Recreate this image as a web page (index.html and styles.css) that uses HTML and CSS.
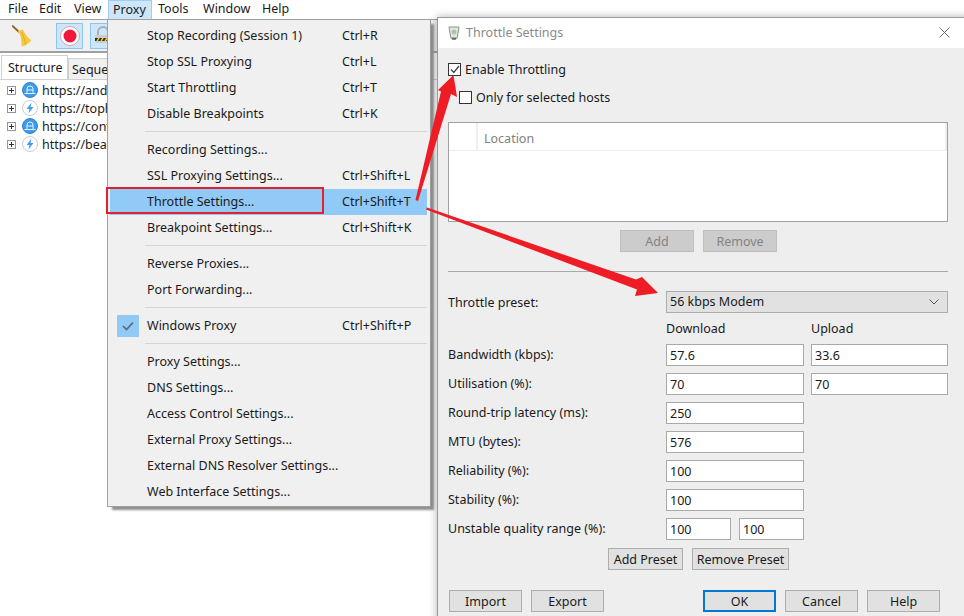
FILE: index.html
```html
<!DOCTYPE html>
<html lang="en">
<head>
<meta charset="utf-8">
<title>Throttle Settings</title>
<link rel="stylesheet" href="styles.css">
</head>
<body>
<div class="desktop">
  <div class="app">
    <nav class="menubar">
      <span class="mb-item mb-file">File</span>
      <span class="mb-item mb-edit">Edit</span>
      <span class="mb-item mb-view">View</span>
      <span class="mb-item mb-proxy">Proxy</span>
      <span class="mb-item mb-tools">Tools</span>
      <span class="mb-item mb-window">Window</span>
      <span class="mb-item mb-help">Help</span>
    </nav>
    <div class="toolbar">
      <span class="tool tool-broom">
        <svg width="20" height="22" viewBox="0 0 20 22"><path d="M0 .5 7 7" stroke="#8a6a2a" stroke-width="2" fill="none"/><path d="M6 6 11 4.500 C13 9 16 13 19.500 15.500 C16 19 13 21 9.500 21.500 C10 15 8.500 10 6 6Z" fill="#f7c93e"/><path d="M9.500 7 C11.500 11 13 15 13.500 19.500" stroke="#e2a91c" fill="none"/></svg>
      </span>
      <span class="tool tool-record">
        <svg width="20" height="20" viewBox="0 0 20 20"><circle cx="10" cy="10" r="9.500" fill="#fff" stroke="#c9a9b2"/><circle cx="10" cy="10" r="6.500" fill="#f0183c"/></svg>
      </span>
      <span class="tool tool-lock">
        <svg width="18" height="20" viewBox="0 0 18 20"><path d="M4 9V6a5 5 0 0 1 10 0v3" fill="none" stroke="#a9b0b8" stroke-width="2"/><rect x="1" y="9" width="16" height="8" fill="#c9ced4"/><rect x="1" y="12" width="16" height="3" fill="#2b2b1a"/><path d="M3 15 5 12M7 15 9 12M11 15 13 12M15 15 17 12" stroke="#f3c62a" stroke-width="1.500"/></svg>
      </span>
    </div>
    <div class="tabs">
      <span class="tab tab-active">Structure</span>
      <span class="tab">Seque</span>
    </div>
    <ul class="tree">
      <li class="tree-row"><span class="expander"></span><svg class="host-icon" width="16" height="16" viewBox="0 0 16 16"><circle cx="8" cy="8" r="7.500" fill="#3d9be9" stroke="#2f83d0"/><path d="M5 11.500V7a3 3 0 0 1 6 0v4.500M2.500 11.500h11M5 8h6" stroke="#e6f3fd" fill="none"/></svg>https://and</li>
      <li class="tree-row"><span class="expander"></span><svg class="host-icon" width="16" height="16" viewBox="0 0 16 16"><circle cx="8" cy="8" r="7.500" fill="#fff" stroke="#c6ccd6"/><path d="M9.500 2.500 4.500 9h3L6.500 13.500 11.500 7h-3Z" fill="#3f9fec"/></svg>https://toph</li>
      <li class="tree-row"><span class="expander"></span><svg class="host-icon" width="16" height="16" viewBox="0 0 16 16"><circle cx="8" cy="8" r="7.500" fill="#3d9be9" stroke="#2f83d0"/><path d="M5 11.500V7a3 3 0 0 1 6 0v4.500M2.500 11.500h11M5 8h6" stroke="#e6f3fd" fill="none"/></svg>https://cont</li>
      <li class="tree-row"><span class="expander"></span><svg class="host-icon" width="16" height="16" viewBox="0 0 16 16"><circle cx="8" cy="8" r="7.500" fill="#fff" stroke="#c6ccd6"/><path d="M9.500 2.500 4.500 9h3L6.500 13.500 11.500 7h-3Z" fill="#3f9fec"/></svg>https://bea</li>
    </ul>
  </div>

  <div class="menu">
    <div class="menu-row"><span>Stop Recording (Session 1)</span><kbd>Ctrl+R</kbd></div>
    <div class="menu-row"><span>Stop SSL Proxying</span><kbd>Ctrl+L</kbd></div>
    <div class="menu-row"><span>Start Throttling</span><kbd>Ctrl+T</kbd></div>
    <div class="menu-row"><span>Disable Breakpoints</span><kbd>Ctrl+K</kbd></div>
    <div class="menu-sep"></div>
    <div class="menu-row"><span>Recording Settings...</span></div>
    <div class="menu-row"><span>SSL Proxying Settings...</span><kbd>Ctrl+Shift+L</kbd></div>
    <div class="menu-row menu-row-hot"><span>Throttle Settings...</span><kbd>Ctrl+Shift+T</kbd></div>
    <div class="menu-row"><span>Breakpoint Settings...</span><kbd>Ctrl+Shift+K</kbd></div>
    <div class="menu-sep"></div>
    <div class="menu-row"><span>Reverse Proxies...</span></div>
    <div class="menu-row"><span>Port Forwarding...</span></div>
    <div class="menu-sep"></div>
    <div class="menu-row">
      <i class="menu-check"><svg width="12" height="10" viewBox="0 0 12 10"><path d="M1 5 4.500 8.500 11 1.500" fill="none" stroke="#5c6670" stroke-width="1.600"/></svg></i>
      <span>Windows Proxy</span><kbd>Ctrl+Shift+P</kbd>
    </div>
    <div class="menu-sep"></div>
    <div class="menu-row"><span>Proxy Settings...</span></div>
    <div class="menu-row"><span>DNS Settings...</span></div>
    <div class="menu-row"><span>Access Control Settings...</span></div>
    <div class="menu-row"><span>External Proxy Settings...</span></div>
    <div class="menu-row"><span>External DNS Resolver Settings...</span></div>
    <div class="menu-row"><span>Web Interface Settings...</span></div>
  </div>

  <section class="dialog">
    <header class="titlebar">
      <svg class="title-icon" width="14" height="15" viewBox="0 0 14 15"><path d="M2 2h10l-1.500 9a3.500 3.500 0 0 1-7 0Z" fill="#e4e6e4" stroke="#8d9089"/><circle cx="7" cy="7" r="2.500" fill="#a9c9a5"/><path d="M5 13.500h4" stroke="#6c6f69" stroke-width="2"/></svg>
      <span class="title-text">Throttle Settings</span>
      <svg class="title-close" width="11" height="11" viewBox="0 0 11 11"><path d="M.5.500l10 10M10.500.500l-10 10" stroke="#6f6f6f" fill="none"/></svg>
    </header>
    <div class="dialog-body">
      <label class="check-row check-main"><span class="checkbox"><svg width="10" height="9" viewBox="0 0 10 9"><path d="M1 4.500 3.800 7.500 9 1" fill="none" stroke="#444" stroke-width="1.300"/></svg></span>Enable Throttling</label>
      <label class="check-row check-sub"><span class="checkbox"></span>Only for selected hosts</label>
      <div class="hosts">
        <div class="hosts-head"><span class="hosts-gutter"></span><span class="hosts-col">Location</span></div>
      </div>
      <div class="hosts-actions">
        <button class="btn btn-off btn-host" type="button">Add</button>
        <button class="btn btn-off btn-host" type="button">Remove</button>
      </div>
      <hr class="rule">
      <div class="form-row preset-row">
        <span class="form-label">Throttle preset:</span>
        <div class="select"><span>56 kbps Modem</span><svg width="10" height="6" viewBox="0 0 10 6"><path d="M.5.500 5 5 9.500.5" fill="none" stroke="#555"/></svg></div>
      </div>
      <div class="form-row col-heads">
        <span class="form-label"></span>
        <span class="col-a">Download</span>
        <span class="col-b">Upload</span>
      </div>
      <div class="form-row"><span class="form-label">Bandwidth (kbps):</span><span class="field col-a">57.6</span><span class="field col-b">33.6</span></div>
      <div class="form-row"><span class="form-label">Utilisation (%):</span><span class="field col-a">70</span><span class="field col-b">70</span></div>
      <div class="form-row"><span class="form-label">Round-trip latency (ms):</span><span class="field col-a">250</span></div>
      <div class="form-row"><span class="form-label">MTU (bytes):</span><span class="field col-a">576</span></div>
      <div class="form-row"><span class="form-label">Reliability (%):</span><span class="field col-a">100</span></div>
      <div class="form-row"><span class="form-label">Stability (%):</span><span class="field col-a">100</span></div>
      <div class="form-row"><span class="form-label">Unstable quality range (%):</span><span class="field col-half">100</span><span class="field col-half2">100</span></div>
      <div class="preset-actions">
        <button class="btn btn-addp" type="button">Add Preset</button>
        <button class="btn btn-remp" type="button">Remove Preset</button>
      </div>
      <div class="dialog-actions">
        <button class="btn btn-foot" type="button">Import</button>
        <button class="btn btn-foot" type="button">Export</button>
        <span class="spacer"></span>
        <button class="btn btn-foot btn-default" type="button">OK</button>
        <button class="btn btn-foot" type="button">Cancel</button>
        <button class="btn btn-foot" type="button">Help</button>
      </div>
    </div>
  </section>

  <div class="callout-box"></div>
  <svg class="arrows" width="964" height="616" viewBox="0 0 964 616">
    <path d="M415.500 200 441 91.500 438 90 453.500 75 457 97 451 94 418 201Z" fill="#ee1c25"/>
    <path d="M427 207.500 636 279.500 642 277 658 293 635 296 637 289.500 426 209.500Z" fill="#ee1c25"/>
  </svg>
</div>
</body>
</html>
```
FILE: styles.css
```css
* { box-sizing: border-box; }
html, body { margin: 0; padding: 0; }
body {
  font-family: "Noto Sans", "Liberation Sans", sans-serif;
  font-size: 12.5px;
  color: #1a1a1a;
  background: #fff;
}
.desktop { position: relative; width: 964px; height: 616px; overflow: hidden; background: #fff; }

/* main window */
.app { display: flex; flex-direction: column; height: 100%; }
.menubar { display: flex; height: 19px; background: #fff; align-items: stretch; }
.mb-item { display: flex; align-items: center; padding-bottom: 2px; }
.mb-file { margin-left: 8px; width: 31px; }
.mb-edit { width: 35px; }
.mb-view { width: 34px; }
.mb-proxy { width: 44px; padding-left: 4px; background: #cde6f9; border: 1px solid #9fcdf0; border-bottom: none; }
.mb-tools { width: 50px; margin-left: 1px; padding-left: 5px; }
.mb-window { width: 59px; }
.mb-help { width: 40px; }

.toolbar {
  display: flex; align-items: center; height: 34px; background: #f0f0f0;
  border-top: 1px solid #a0a0a0; border-bottom: 2px solid #a0a0a0;
}
.tool { display: flex; align-items: center; justify-content: center; }
.tool-broom { margin-left: 12px; width: 20px; }
.tool-record { margin-left: 24px; width: 27px; height: 26px; background: #cde6f9; border: 1px solid #8fc6f0; }
.tool-lock { margin-left: 7px; width: 26px; height: 26px; background: #cde6f9; border: 1px solid #8fc6f0; }

.tabs { display: flex; align-items: flex-end; height: 27px; padding-left: 1px; background: #fff; border-bottom: 1px solid #d0d0d0; }
.tab { display: flex; flex: none; align-items: center; height: 21px; padding: 0 3px; background: #f0f0f0; border: 1px solid #d0d0d0; border-bottom: none; }
.tab-active { height: 24px; width: 67px; padding-left: 6px; background: #fff; }
.tree { list-style: none; margin: 0; padding: 1px 0 0 7px; }
.tree-row { display: flex; align-items: center; height: 18px; white-space: nowrap; }
.expander { position: relative; flex: none; width: 9px; height: 9px; margin-right: 6px; border: 1px solid #8f96a8; background: #fff; }
.expander::before { content: ""; position: absolute; left: 1px; right: 1px; top: 3px; height: 1px; background: #333; }
.expander::after { content: ""; position: absolute; top: 1px; bottom: 1px; left: 3px; width: 1px; background: #333; }
.host-icon { margin-right: 4px; flex: none; }

/* dropdown menu */
.menu {
  position: absolute; left: 107px; top: 19px; width: 324px; height: 488px;
  padding: 3px 3px 0 2px; background: #f0f0f0; border: 1px solid #a0a0a0;
  box-shadow: 4px 4px 2px -1px #8f8f8f;
}
.menu-row { position: relative; display: flex; align-items: center; justify-content: space-between; height: 26px; padding: 0 0 2px 37px; white-space: nowrap; }
.menu-row kbd { font: inherit; width: 85px; flex: none; }
.menu-row-hot { background: #91c9f7; }
.menu-sep { height: 10px; margin-left: 35px; position: relative; }
.menu-sep::after { content: ""; position: absolute; left: 0; right: 0; top: 4px; height: 1px; background: #d5d5d5; }
.menu-check { position: absolute; left: 7px; top: 2px; width: 22px; height: 22px; display: flex; align-items: center; justify-content: center; background: #91c9f7; }

/* dialog */
.dialog {
  position: absolute; left: 437px; top: 17px; width: 540px; height: 620px;
  display: flex; flex-direction: column; background: #eee;
  border: 1px solid #9a9a9a; box-shadow: 0 0 8px rgba(0,0,0,.3);
}
.titlebar { display: flex; align-items: center; flex: none; height: 30px; background: #fff; padding: 0 0 2px 9px; }
.title-icon { margin-right: 5px; }
.title-text { color: #8a8a8a; }
.title-close { margin-left: 376px; }
.dialog-body { width: 526px; flex: 1; padding: 14px 0 0 10px; }
.check-row { display: flex; align-items: center; height: 14px; }
.checkbox { display: flex; align-items: center; justify-content: center; width: 13px; height: 13px; margin-right: 4px; background: #fff; border: 1px solid #333; }
.check-sub { margin-top: 14px; padding-left: 11px; }
.hosts { margin-top: 18px; width: 500px; height: 100px; background: #fff; border: 1px solid #a0a0a0; }
.hosts-head { display: flex; height: 28px; border-bottom: 1px solid #eee; color: #808080; }
.hosts-gutter { width: 29px; border-right: 2px solid #eee; }
.hosts-col { flex: 1; display: flex; align-items: center; padding: 3px 0 0 6px; border-right: 2px solid #eee; }
.hosts-actions { display: flex; gap: 9px; margin-top: 8px; padding-left: 172px; }
.btn { padding: 0; font: inherit; color: #1a1a1a; background: #e1e1e1; border: 1px solid #adadad; }
.btn-host { width: 74px; height: 22px; }
.btn-off { background: #ccc; color: #838383; border-color: #bfbfbf; }
.rule { margin: 19px 0 0; width: 500px; height: 1px; background: #a9a9a9; border: 0; }
.form-row { display: flex; align-items: center; height: 22px; margin-top: 7px; }
.preset-row { margin-top: 19px; }
.col-heads { margin-top: 6px; height: 18px; }
.form-label { width: 218px; flex: none; padding-bottom: 2px; }
.preset-row .form-label { padding-bottom: 0; }
.select { display: flex; align-items: center; justify-content: space-between; width: 282px; height: 22px; padding: 0 8px 1px 3px; background: #e1e1e1; border: 1px solid #adadad; }
.col-a { width: 138px; }
.col-b { width: 137px; margin-left: 7px; }
.col-half { width: 65px; }
.col-half2 { width: 65px; margin-left: 8px; }
.field { display: flex; align-items: center; height: 22px; padding-left: 3px; background: #fff; border: 1px solid #a9a9a9; }
.preset-actions { display: flex; gap: 9px; margin-top: 8px; padding-left: 160px; }
.btn-addp { width: 75px; height: 22px; }
.btn-remp { width: 97px; height: 22px; }
.dialog-actions { display: flex; gap: 9px; margin-top: 20px; width: 492px; padding-left: 1px; }
.btn-foot { width: 73px; height: 22px; }
.spacer { flex: 1; }
.btn-default { border: 2px solid #0078d7; }

/* annotations */
.callout-box { position: absolute; left: 106px; top: 187px; width: 218px; height: 27px; border: 2px solid #e3202c; }
.arrows { position: absolute; left: 0; top: 0; pointer-events: none; }
```
